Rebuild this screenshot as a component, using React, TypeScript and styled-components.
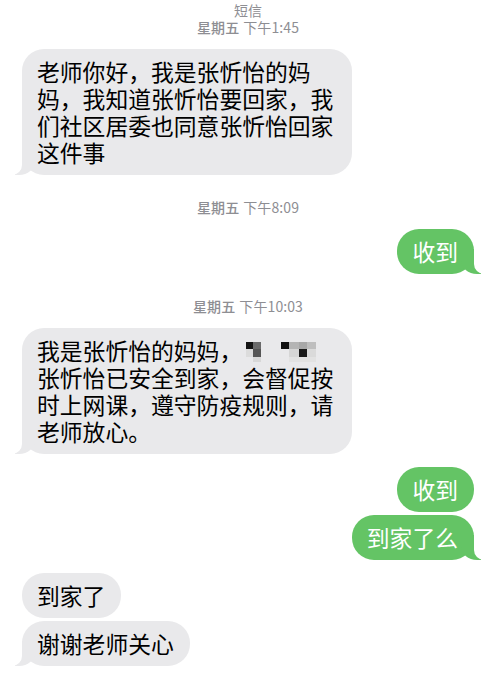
import React from "react";
import styled, { createGlobalStyle, css } from "styled-components";

const Global = createGlobalStyle`
  html, body { margin: 0; padding: 0; background: #ffffff; }
  body {
    font-family: "Noto Sans CJK SC", "Noto Sans", "Liberation Sans", sans-serif;
    -webkit-font-smoothing: antialiased;
  }
`;

const GRAY = "#e9e9eb";
const GREEN = "#64c465";

const Screen = styled.div`
  width: 496px;
  height: 693px;
  box-sizing: border-box;
  padding: 2px 22px 0 22px;
  display: flex;
  flex-direction: column;
  overflow: hidden;
  background: #fff;
`;

const Caption = styled.div<{ $mt: number }>`
  margin-top: ${(p) => p.$mt}px;
  text-align: center;
  font-size: 14px;
  line-height: 17px;
  color: #8e8e93;
  letter-spacing: 0.1px;
`;

const Day = styled.span`
  font-weight: 500;
  margin-right: 4px;
`;

const Row = styled.div<{ $side: "left" | "right"; $mt: number }>`
  display: flex;
  justify-content: ${(p) => (p.$side === "right" ? "flex-end" : "flex-start")};
  margin-top: ${(p) => p.$mt}px;
`;

const leftTail = css`
  &::before {
    content: "";
    position: absolute;
    bottom: 0;
    left: -7px;
    width: 20px;
    height: 25px;
    background: ${GRAY};
    border-bottom-right-radius: 16px 14px;
  }
  &::after {
    content: "";
    position: absolute;
    bottom: 0;
    left: -26px;
    width: 26px;
    height: 25px;
    background: #fff;
    border-bottom-right-radius: 10px;
  }
`;

const rightTail = css`
  &::before {
    content: "";
    position: absolute;
    bottom: 0;
    right: -7px;
    width: 20px;
    height: 25px;
    background: ${GREEN};
    border-bottom-left-radius: 16px 14px;
  }
  &::after {
    content: "";
    position: absolute;
    bottom: 0;
    right: -26px;
    width: 26px;
    height: 25px;
    background: #fff;
    border-bottom-left-radius: 10px;
  }
`;

const Bubble = styled.div<{ $me?: boolean; $tail?: boolean }>`
  position: relative;
  box-sizing: border-box;
  max-width: 330px;
  padding: 9px 16px 9px 15px;
  border-radius: 22px;
  font-size: 22.8px;
  line-height: 27px;
  background: ${(p) => (p.$me ? GREEN : GRAY)};
  color: ${(p) => (p.$me ? "#ffffff" : "#000000")};
  line-break: strict;
  ${(p) => (p.$tail ? (p.$me ? rightTail : leftTail) : "")}
`;

const Text = styled.span`
  position: relative;
  z-index: 1;
`;

const Mosaic = styled.svg`
  display: inline-block;
  vertical-align: -4px;
  margin-left: 4px;
`;

const Pixelated = () => (
  <Mosaic width="72" height="22" viewBox="0 0 72 22">
    <rect x="0" y="0" width="7" height="7" fill="#141414" />
    <rect x="7" y="0" width="8" height="7" fill="#6a6a6a" />
    <rect x="0" y="7" width="7" height="8" fill="#dcdcdc" />
    <rect x="7" y="7" width="8" height="8" fill="#555555" />
    <rect x="7" y="15" width="8" height="5" fill="#d8d8d8" />
    <rect x="35" y="0" width="8" height="7" fill="#111111" />
    <rect x="43" y="0" width="10" height="7" fill="#b4b4b4" />
    <rect x="53" y="0" width="8" height="7" fill="#a8a8a8" />
    <rect x="61" y="0" width="9" height="7" fill="#bebebe" />
    <rect x="43" y="7" width="10" height="8" fill="#d6d6d6" />
    <rect x="53" y="7" width="8" height="8" fill="#1a1a1a" />
    <rect x="61" y="7" width="9" height="8" fill="#dadada" />
    <rect x="43" y="15" width="27" height="5" fill="#e2e2e2" />
  </Mosaic>
);

export default function App() {
  return (
    <>
      <Global />
      <Screen>
        <Caption $mt={0}>短信</Caption>
        <Caption $mt={0}>
          <Day>星期五</Day>下午1:45
        </Caption>

        <Row $side="left" $mt={13}>
          <Bubble $tail>
            <Text>老师你好，我是张忻怡的妈妈，我知道张忻怡要回家，我们社区居委也同意张忻怡回家这件事</Text>
          </Bubble>
        </Row>

        <Caption $mt={24}>
          <Day>星期五</Day>下午8:09
        </Caption>

        <Row $side="right" $mt={13}>
          <Bubble $me $tail>
            <Text>收到</Text>
          </Bubble>
        </Row>

        <Caption $mt={24}>
          <Day>星期五</Day>下午10:03
        </Caption>

        <Row $side="left" $mt={13}>
          <Bubble $tail>
            <Text>
              我是张忻怡的妈妈，
              <Pixelated />
              <br />
              张忻怡已安全到家，会督促按时上网课，遵守防疫规则，请老师放心。
            </Text>
          </Bubble>
        </Row>

        <Row $side="right" $mt={13}>
          <Bubble $me>
            <Text>收到</Text>
          </Bubble>
        </Row>
        <Row $side="right" $mt={3}>
          <Bubble $me $tail>
            <Text>到家了么</Text>
          </Bubble>
        </Row>

        <Row $side="left" $mt={13}>
          <Bubble>
            <Text>到家了</Text>
          </Bubble>
        </Row>
        <Row $side="left" $mt={3}>
          <Bubble $tail>
            <Text>谢谢老师关心</Text>
          </Bubble>
        </Row>
      </Screen>
    </>
  );
}
